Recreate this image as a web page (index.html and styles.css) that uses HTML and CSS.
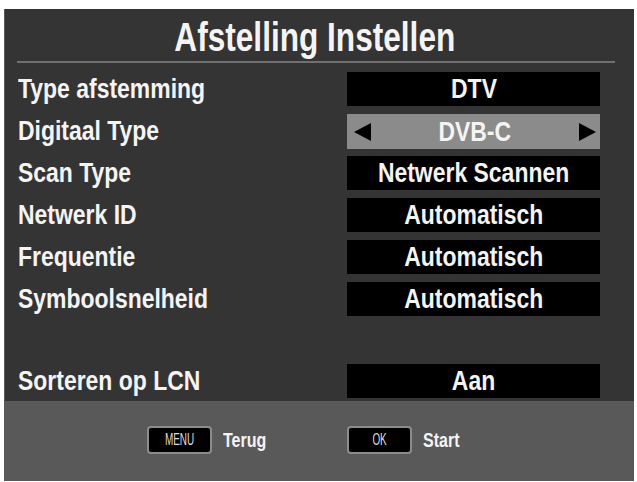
FILE: index.html
```html
<!DOCTYPE html>
<html>
<head>
<meta charset="utf-8">
<link rel="stylesheet" href="styles.css">
</head>
<body>
<div class="panel">
  <div class="title"><span class="tt">Afstelling Instellen</span></div>
  <div class="sep"></div>
  <div class="rows">
    <div class="row"><div class="label"><span class="lt">Type afstemming</span></div><div class="value"><span class="vt">DTV</span></div></div>
    <div class="row"><div class="label"><span class="lt">Digitaal Type</span></div><div class="value selected"><span class="arrow left"></span><span class="vt">DVB-C</span><span class="arrow right"></span></div></div>
    <div class="row"><div class="label"><span class="lt">Scan Type</span></div><div class="value"><span class="vt">Netwerk Scannen</span></div></div>
    <div class="row"><div class="label"><span class="lt">Netwerk ID</span></div><div class="value"><span class="vt">Automatisch</span></div></div>
    <div class="row"><div class="label"><span class="lt">Frequentie</span></div><div class="value"><span class="vt">Automatisch</span></div></div>
    <div class="row"><div class="label"><span class="lt">Symboolsnelheid</span></div><div class="value"><span class="vt">Automatisch</span></div></div>
    <div class="row spacer"></div>
    <div class="row last"><div class="label"><span class="lt">Sorteren op LCN</span></div><div class="value"><span class="vt">Aan</span></div></div>
  </div>
  <div class="footer">
    <div class="hint"><span class="key"><span class="kt">MENU</span></span><span class="htext">Terug</span></div>
    <div class="hint"><span class="key"><span class="kt">OK</span></span><span class="htext">Start</span></div>
  </div>
</div>
</body>
</html>
```
FILE: styles.css
```css
html, body {
  margin: 0;
  padding: 0;
  background: #ffffff;
}
body {
  width: 637px;
  height: 482px;
  overflow: hidden;
  font-family: "Liberation Sans", Arial, sans-serif;
  font-weight: bold;
  color: #f4f4f4;
}
.panel {
  margin: 9px 3px 0 4px;
  width: 630px;
  height: 472px;
  background: #343434;
  display: flex;
  flex-direction: column;
  box-shadow: inset 1px 0 0 #5a5a5a;
}
.title {
  height: 52px;
  line-height: 56px;
  font-size: 40px;
  text-align: center;
  padding-right: 8px;
}
.tt {
  display: inline-block;
  transform: scaleX(0.79);
  transform-origin: center;
}
.sep {
  height: 2px;
  margin: 0 19px 0 13px;
  background: #707070;
}
.rows {
  padding: 9px 34px 0 14px;
  display: flex;
  flex-direction: column;
}
.row {
  height: 42px;
  display: flex;
  align-items: flex-start;
  justify-content: space-between;
}
.row.spacer {
  height: 40px;
}
.row.last {
  height: 37px;
}
.label {
  font-size: 27px;
  line-height: 34px;
  white-space: nowrap;
}
.lt {
  display: inline-block;
  transform: scaleX(0.85);
  transform-origin: left center;
}
.value {
  width: 253px;
  height: 34px;
  background: #000000;
  font-size: 27px;
  line-height: 34px;
  text-align: center;
  white-space: nowrap;
}
.vt {
  display: inline-block;
  transform: scaleX(0.85);
  transform-origin: center;
}
.value.selected {
  height: 35px;
  background: #8b8b8b;
  display: flex;
  align-items: center;
  justify-content: space-between;
  padding: 0 4px 0 7px;
  box-sizing: border-box;
}
.arrow {
  width: 0;
  height: 0;
  border-top: 9px solid transparent;
  border-bottom: 9px solid transparent;
}
.arrow.left {
  border-right: 17px solid #000;
}
.arrow.right {
  border-left: 17px solid #000;
}
.footer {
  flex: 1;
  background: #595959;
  display: flex;
  align-items: center;
  padding-left: 143px;
  gap: 64px;
  padding-bottom: 2px;
}
.hint {
  display: flex;
  align-items: center;
  width: 136px;
}
.key {
  width: 61px;
  height: 24px;
  border: 2px solid #8c8c8c;
  border-radius: 4px;
  background: #000;
  color: #dcdcdc;
  font-weight: normal;
  font-size: 16px;
  line-height: 24px;
  text-align: center;
  margin-right: 11px;
}
.kt {
  display: inline-block;
  transform: scaleX(0.62);
  transform-origin: center;
}
.htext {
  display: inline-block;
  font-size: 20px;
  transform: scaleX(0.8);
  transform-origin: left center;
}
```
